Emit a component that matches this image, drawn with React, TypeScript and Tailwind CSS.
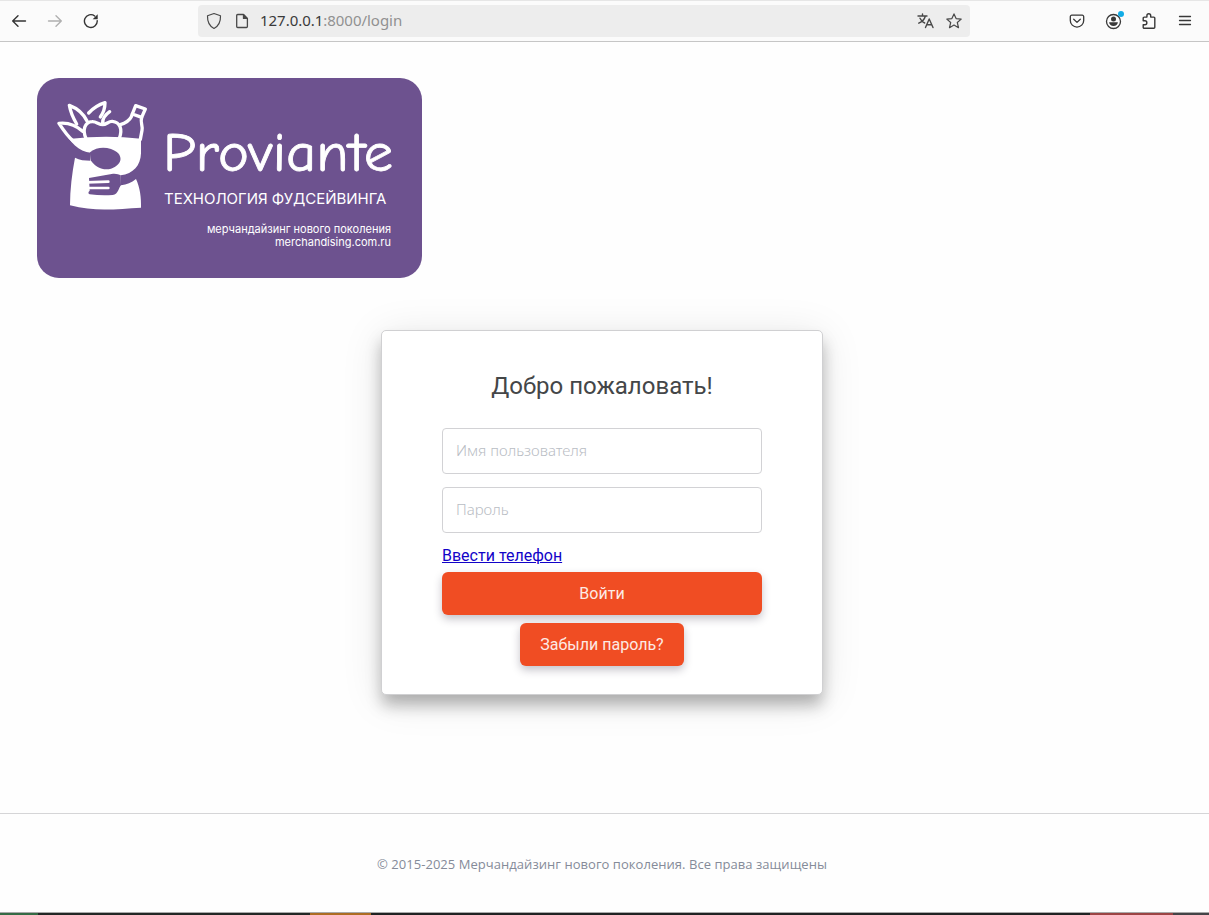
import React from "react";

function BrowserBar() {
  return (
    <header className="flex h-[42px] shrink-0 items-center border-t border-b border-t-[#e6e6e6] border-b-[#c6c6c6] bg-[#fbfbfb] text-[#3a3a3a]">
      <nav className="flex w-[198px] items-center gap-5 pl-[11px]">
        <svg width="16" height="16" viewBox="0 0 16 16" fill="none" stroke="#343434" strokeWidth="1.4" strokeLinecap="round" strokeLinejoin="round">
          <path d="M14.5 8H1.7M7 2.8 1.7 8 7 13.2" />
        </svg>
        <svg width="16" height="16" viewBox="0 0 16 16" fill="none" stroke="#b0b0b0" strokeWidth="1.4" strokeLinecap="round" strokeLinejoin="round">
          <path d="M1.5 8h12.8M9 2.8 14.3 8 9 13.2" />
        </svg>
        <svg width="16" height="16" viewBox="0 0 16 16" fill="none" stroke="#343434" strokeWidth="1.4" strokeLinecap="round">
          <path d="M14.2 7.6A6.4 6.4 0 1 1 11.7 3" />
          <path d="M14.7 1.2v5h-5z" fill="#343434" stroke="none" />
        </svg>
      </nav>
      <div className="flex h-8 w-[772px] items-center rounded bg-[#ededed] pr-2 pl-2">
        <svg width="16" height="18" viewBox="0 0 16 18" fill="none" stroke="#484848" strokeWidth="1.2" strokeLinejoin="round">
          <path d="M8 1.5 14.5 3.8c.2 5.7-1.6 10.2-6.5 12.7C3.1 14 1.3 9.5 1.5 3.8z" />
        </svg>
        <svg className="ml-3" width="16" height="16" viewBox="0 0 16 16" fill="none" stroke="#484848" strokeWidth="1.3" strokeLinejoin="round">
          <path d="M2.7 2.5a1 1 0 0 1 1-1h5.8l3.9 3.9v8.1a1 1 0 0 1-1 1H3.7a1 1 0 0 1-1-1z" />
          <path d="M9.5 1.8v3.6h3.6z" fill="#484848" />
        </svg>
        <div className="mb-0.5 ml-[10px] font-['Noto_Sans',sans-serif] text-[15px] leading-5 tracking-[-0.03px] text-[#919191]">
          <span className="text-[#3a3a3a]">127.0.0.1</span>:8000/login
        </div>
        <div className="ml-auto flex items-center gap-3">
          <svg width="17" height="16" viewBox="0 0 17 16" fill="none" stroke="#484848" strokeWidth="1.4" strokeLinecap="round" strokeLinejoin="round">
            <path d="M1 3h9M5.5 1v2M8.3 3.2C7.4 6.6 4.8 8.9 1.8 10.2M3 5.2c1 2.2 2.7 3.9 4.7 4.8M8.5 14.5 12.2 6l3.8 8.5M9.6 11.8h5.2" />
          </svg>
          <svg width="16" height="16" viewBox="0 0 16 16" fill="none" stroke="#484848" strokeWidth="1.2" strokeLinejoin="round">
            <path d="m8 .9 2.1 4.7 5.1.5-3.9 3.4 1.2 5.2L8 12l-4.5 2.7 1.2-5.2L.8 6.1l5.1-.5z" />
          </svg>
        </div>
      </div>
      <div className="ml-auto flex items-center gap-5 pr-4">
        <svg width="16" height="16" viewBox="0 0 16 16" fill="none" stroke="#383838" strokeWidth="1.3" strokeLinecap="round" strokeLinejoin="round">
          <path d="M2.8 2.2h10.4a1.5 1.5 0 0 1 1.5 1.5V7.4a6.7 6.7 0 0 1-13.4 0V3.7a1.5 1.5 0 0 1 1.5-1.5z" />
          <path d="M4.7 6.3 8 9.4l3.3-3.1" />
        </svg>
        <svg className="overflow-visible" width="16" height="16" viewBox="0 0 16 16" fill="#383838">
          <circle cx="8.5" cy="8.5" r="7" fill="none" stroke="#383838" strokeWidth="1.3" />
          <circle cx="8.5" cy="6" r="2.5" />
          <path d="M4.1 9.3h8.8c-.2 2.3-2 3.8-4.4 3.8s-4.2-1.5-4.4-3.8z" />
          <circle cx="16" cy="1" r="3" fill="#12ace6" />
        </svg>
        <svg width="16" height="18" viewBox="0 0 16 18" fill="none" stroke="#383838" strokeWidth="1.4" strokeLinejoin="round">
          <path d="M2.2 8.8V6.1a1 1 0 0 1 1-1h2.7V3.7a1.9 1.9 0 0 1 3.8 0v1.4h3.1a1 1 0 0 1 1 1v9.2a1 1 0 0 1-1 1H3.2a1 1 0 0 1-1-1v-2.6h1.7a1.9 1.9 0 0 0 0-3.9z" />
        </svg>
        <svg width="16" height="16" viewBox="0 0 16 16" fill="none" stroke="#383838" strokeWidth="1.3" strokeLinecap="round">
          <path d="M2.5 3.5h11M2.5 7.5h11M2.5 11.5h11" />
        </svg>
      </div>
    </header>
  );
}

function GroceryBag() {
  return (
    <svg className="mt-[22px] ml-5 shrink-0" width="92" height="112" viewBox="81 90 276 336">
      <g fill="none" stroke="#fff" strokeWidth="10" strokeLinecap="round" strokeLinejoin="round">
        <path d="M130 213C116 202 100 180 87 160c26-3 50 5 71 24" />
        <path d="M140 162c-12-20-19-38-22-56 24 9 42 24 53 47" />
        <path d="M176 129c14-15 30-25 49-31 0 15-4 29-14 43" />
        <path d="M168 205c-12-26-3-49 18-50 13-1 20 9 32 9s17-11 29-10c24 2 31 25 21 51M218 160c-1-14 8-26 21-35" />
        <path d="M271 164c15-5 26-10 33-24l3-8M335 143c-5 14 4 23 1 38l-5 27" />
        <path d="m317 107 29 10-11 25-28-10z" />
      </g>
      <path
        fill="#fff"
        d="M104 184 124 206q104-12 209 0v44c-1 36-23 62-61 66l1 30c18-2 31-8 45-19 12 25 16 57 15 86-73 4-138 13-213-7 0-48 6-96 15-143 14 7 29 9 46 9l2-24c-37-2-65-33-79-64z"
      />
      <g fill="#6d528f">
        <path d="M180 247c18-15 42-17 63-10 38 13 38 46 0 59-23 7-47-5-60-24z" />
        <path d="m177 324 68-12c12-2 21 1 27 4l1 30c-7 6-7 27-25 29-23 2-46 1-69-2-5-2-5-8 0-11z" />
      </g>
      <path stroke="#fff" strokeWidth="8" strokeLinecap="round" d="M171 337l64-2M171 354h64" />
    </svg>
  );
}

function Brand() {
  return (
    <div className="mt-9 ml-[37px] flex h-[200px] w-[385px] shrink-0 rounded-[22px] bg-[#6d528f] text-white">
      <GroceryBag />
      <div className="ml-[15px] flex w-[228px] flex-col pt-[48px]">
        <svg className="shrink-0 overflow-visible" width="228" height="56" viewBox="0 0 228 56">
          <text
            x="-1"
            y="45"
            textLength="230"
            lengthAdjust="spacingAndGlyphs"
            fill="#fff"
            stroke="#fff"
            strokeWidth="0.8"
            className="font-['Comic_Neue',cursive] text-[54px]"
          >
            Proviante
          </text>
        </svg>
        <div className="mt-[6px] font-[Inter,sans-serif] text-[15px] leading-[22px] tracking-[-0.03px] whitespace-nowrap">ТЕХНОЛОГИЯ ФУДСЕЙВИНГА</div>
        <div className="mt-[13px] pr-px text-right font-[Inter,sans-serif] text-[11px] leading-[13px] whitespace-nowrap">
          <p>мерчандайзинг нового поколения</p>
          <p>merchandising.com.ru</p>
        </div>
      </div>
    </div>
  );
}

const fieldClass =
  "h-[46px] w-full rounded-[4px] border border-[#d2d2d5] bg-white px-[13px] pb-0.5 font-['Noto_Sans',sans-serif] text-[15px] font-light outline-none placeholder:text-[#b9bdc4]";
const buttonClass =
  "h-[43px] rounded-[6px] bg-[#f04d23] text-base text-[#fdeae4] shadow-[0_4px_9px_rgba(40,35,60,0.27)]";

function LoginCard() {
  return (
    <form className="mt-[52px] ml-[381px] flex h-[365px] w-[442px] shrink-0 flex-col items-center rounded-[5px] border border-[#d0d0d2] bg-white px-[60px] font-[Roboto,sans-serif] shadow-[0_11px_16px_-1px_rgba(0,0,0,0.28),0_5px_42px_rgba(0,0,0,0.1)]">
      <h1 className="mt-[39px] text-2xl leading-8 whitespace-nowrap text-[#444648]">Добро пожаловать!</h1>
      <input className={`${fieldClass} mt-[26px]`} placeholder="Имя пользователя" />
      <input className={`${fieldClass} mt-[13px]`} type="password" placeholder="Пароль" />
      <a href="#" className="mt-[11px] self-start text-base leading-6 text-[#1203c8] underline">Ввести телефон</a>
      <button type="button" className={`${buttonClass} mt-1 w-full`}>Войти</button>
      <button type="button" className={`${buttonClass} mt-2 w-[164px]`}>Забыли пароль?</button>
    </form>
  );
}

export default function App() {
  return (
    <div className="flex h-[915px] w-[1209px] flex-col overflow-hidden bg-[#fefefe]">
      <BrowserBar />
      <Brand />
      <LoginCard />
      <footer className="mt-[118px] flex h-[99px] shrink-0 items-center justify-center border-t border-[#d5d5d7] pr-[5px] pt-1 font-['Open_Sans',sans-serif] text-[13px] tracking-[0.045px] text-[#858b99]">
        © 2015-2025 Мерчандайзинг нового поколения. Все права защищены
      </footer>
      <div className="flex h-[3px] shrink-0 border-t border-[#a9aaaa]">
        <div className="w-[38px] bg-[#356b45]" />
        <div className="w-[272px] bg-[#222725]" />
        <div className="w-[61px] bg-[#ad6c22]" />
        <div className="w-[719px] bg-[#202222]" />
        <div className="w-[83px] bg-[#9c4444]" />
        <div className="flex-1 bg-[#444447]" />
      </div>
    </div>
  );
}
